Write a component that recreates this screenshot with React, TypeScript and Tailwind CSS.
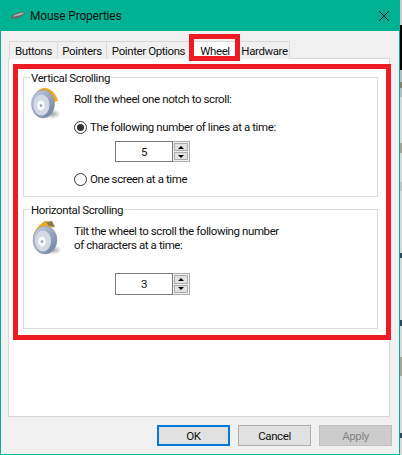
import { type FC } from 'react'

const TABS = [
  { id: 'buttons', label: 'Buttons', width: 'w-[49px]' },
  { id: 'pointers', label: 'Pointers', width: 'w-[50px]' },
  { id: 'options', label: 'Pointer Options', width: 'w-[85px]' },
  { id: 'wheel', label: 'Wheel', width: 'w-[50px]' },
  { id: 'hardware', label: 'Hardware', width: 'w-[51px]' },
]

// the sliver of the window behind this one, along the right edge
const BEHIND = [
  { id: 'a', className: 'h-[25px] bg-[#c9c9c9]' },
  { id: 'b', className: 'h-[45px] bg-black' },
  { id: 'c', className: 'h-[12px] bg-[#b8bcc0]' },
  { id: 'd', className: 'h-[6px] bg-[#8a7f6a]' },
  { id: 'e', className: 'h-[9px] bg-[#b8bcc0]' },
  { id: 'f', className: 'h-[46px] bg-[#d8d8d8]' },
  { id: 'g', className: 'h-[10px] bg-[#a89f92]' },
  { id: 'h', className: 'h-[29px] bg-[#d8d8d8]' },
  { id: 'i', className: 'h-[9px] bg-[#c4c4c4]' },
  { id: 'j', className: 'h-[62px] bg-[#d8d8d8]' },
  { id: 'k', className: 'h-[5px] bg-[#33465c]' },
  { id: 'l', className: 'h-[62px] bg-[#d8d8d8]' },
  { id: 'm', className: 'h-[6px] bg-[#33465c]' },
  { id: 'n', className: 'h-[31px] bg-[#d8d8d8]' },
  { id: 'o', className: 'h-[19px] bg-[#a9a49a]' },
  { id: 'p', className: 'h-[57px] bg-[#d8d8d8]' },
  { id: 'q', className: 'h-[5px] bg-[#33465c]' },
  { id: 'r', className: 'h-[17px] bg-[#d8d8d8]' },
]

const MouseIcon = () => (
  <svg width="16" height="9" viewBox="0 0 16 9" className="shrink-0">
    <path d="M1 6 C1 4.500 4 3 8 1.500 C11 0.500 14.500 0.500 15 2 C15.500 3.500 13 5 9 7 C5 8.500 1 8.500 1 6 Z" fill="#636e70" />
    <path d="M3 5 C5 3.500 9 2 13 1.500 C14 1.500 14 2.500 13 3 C10 4.500 6 5.500 3 5.500 Z" fill="#aab3b5" />
  </svg>
)

const VerticalWheel = () => (
  <svg width="32" height="36" viewBox="0 0 32 36" className="shrink-0">
    <defs>
      <linearGradient id="rimA" x1="0" y1="0" x2="1" y2="1">
        <stop offset="0" stopColor="#c9d3e4" />
        <stop offset="1" stopColor="#6b7b9c" />
      </linearGradient>
      <radialGradient id="shadowA">
        <stop offset="0" stopColor="#666" stopOpacity="0.6" />
        <stop offset="1" stopColor="#666" stopOpacity="0" />
      </radialGradient>
    </defs>
    <ellipse cx="21" cy="27" rx="9" ry="5" fill="url(#shadowA)" />
    <path d="M5 6 C8 1 14 0 18 2 C22 4 26 9 27 14 L23 15 C20 10 15 6 9 7 Z" fill="#eda81f" />
    <ellipse cx="12" cy="17" rx="11.500" ry="14" fill="url(#rimA)" stroke="#8492ac" strokeWidth="0.5" />
    <ellipse cx="10.500" cy="18" rx="8" ry="10.500" fill="#d3dae4" />
    <ellipse cx="10" cy="18.500" rx="3.800" ry="5" fill="#f9fafc" />
    <circle cx="10" cy="18.500" r="1.300" fill="#8d9bb0" />
  </svg>
)

const HorizontalWheel = () => (
  <svg width="32" height="36" viewBox="0 0 32 36" className="shrink-0">
    <defs>
      <linearGradient id="rimB" x1="0" y1="0" x2="1" y2="1">
        <stop offset="0" stopColor="#c9d3e4" />
        <stop offset="1" stopColor="#6b7b9c" />
      </linearGradient>
      <radialGradient id="shadowB">
        <stop offset="0" stopColor="#666" stopOpacity="0.6" />
        <stop offset="1" stopColor="#666" stopOpacity="0" />
      </radialGradient>
    </defs>
    <ellipse cx="22" cy="30" rx="9" ry="4.500" fill="url(#shadowB)" />
    <path d="M2 17 C3 10 9 4 14 1 L19 2 L24 7 L17 8 L8 13 L5 20 Z" fill="#eda81f" />
    <path d="M15 2 L21 1 L24 7 L18 6 Z" fill="#8c7a55" />
    <ellipse cx="14" cy="20" rx="12" ry="14" fill="url(#rimB)" stroke="#8492ac" strokeWidth="0.5" />
    <ellipse cx="12" cy="21" rx="8" ry="10.500" fill="#d3dae4" />
    <ellipse cx="11" cy="21.500" rx="3.800" ry="5" fill="#f9fafc" />
    <circle cx="11" cy="21.500" r="1.300" fill="#8d9bb0" />
  </svg>
)

const Radio: FC<{ checked?: boolean; label: string }> = ({ checked, label }) => (
  <div className="flex items-center gap-[3px] h-[16px]">
    <span className="w-[13px] h-[13px] rounded-full border border-[#333] bg-white flex items-center justify-center">
      {checked && <span className="w-[7px] h-[7px] rounded-full bg-[#333]" />}
    </span>
    <span>{label}</span>
  </div>
)

const Spinner: FC<{ value: number; height: string }> = ({ value, height }) => (
  <div className={`ml-[41px] w-[75px] ${height} flex`}>
    <div className="flex-1 flex items-center justify-center border border-[#7a7a7a] bg-white">{value}</div>
    <div className="w-[17px] flex flex-col border border-l-0 border-[#acacac] bg-[#f0f0f0]">
      <div className="flex-1 m-px mb-0 bg-[#e1e1e1] border border-[#acacac] flex items-center justify-center">
        <span className="w-0 h-0 border-x-[3px] border-x-transparent border-b-[3px] border-b-black" />
      </div>
      <div className="flex-1 m-px bg-[#e1e1e1] border border-[#acacac] flex items-center justify-center">
        <span className="w-0 h-0 border-x-[3px] border-x-transparent border-t-[3px] border-t-black" />
      </div>
    </div>
  </div>
)

const App = () => {
  return (
    <div className="w-[402px] h-[455px] flex bg-white text-[11.5px] tracking-[-0.4px] leading-[16px] text-[#111] font-['Roboto',sans-serif]">
      <div className="w-[400px] h-[455px] border-x border-b border-[#00b294] bg-[#f0f0f0] flex flex-col">
        <header className="h-[31px] -mx-px bg-[#00b294] flex items-center justify-between pl-[10px] pr-[10px]">
          <div className="flex items-center gap-[4px] text-[12px] tracking-[-0.2px]">
            <MouseIcon />
            <span>Mouse Properties</span>
          </div>
          <svg width="12" height="12" viewBox="0 0 12 12" className="shrink-0">
            <path d="M1 1 L11 11 M11 1 L1 11" stroke="#111" strokeWidth="1" />
          </svg>
        </header>

        <div className="relative mt-[10px] ml-[8px] h-[17px] flex">
          {TABS.map(tab => (
            <div
              key={tab.id}
              className={`${tab.width} h-[18px] flex items-center justify-center border border-b-0 border-[#d9d9d9] -mr-px ${
                tab.id === 'wheel' ? 'bg-white' : 'bg-[#f0f0f0]'
              }`}
            >
              {tab.label}
            </div>
          ))}
          <div className="absolute left-[180px] top-[-7px] w-[51px] h-[27px] border-[5px] border-[#ed1c24]" />
        </div>

        <main className="ml-[7px] w-[382px] h-[359px] border border-[#d9d9d9] bg-white pt-[5px] pl-[4px]">
          <div className="w-[378px] h-[276px] border-[5px] border-[#ed1c24] pl-[5px] pr-[8px] flex flex-col gap-[4px]">
            <fieldset className="h-[128px] border border-[#dcdcdc] pl-[6px]">
              <legend className="px-[1px] translate-y-[1px]">Vertical Scrolling</legend>
              <div className="flex pt-[2px] pl-[1px]">
                <VerticalWheel />
                <div className="ml-[11px] flex flex-col">
                  <div className="mt-[4px]">Roll the wheel one notch to scroll:</div>
                  <div className="mt-[12px]">
                    <Radio checked label="The following number of lines at a time:" />
                  </div>
                  <div className="mt-[6px]">
                    <Spinner value={5} height="h-[21px]" />
                  </div>
                  <div className="mt-[9px]">
                    <Radio label="One screen at a time" />
                  </div>
                </div>
              </div>
            </fieldset>
            <fieldset className="h-[128px] border border-[#dcdcdc] pl-[6px]">
              <legend className="px-[1px] translate-y-[1px]">Horizontal Scrolling</legend>
              <div className="flex pt-[3px] pl-[1px]">
                <HorizontalWheel />
                <div className="ml-[11px] flex flex-col">
                  <div className="mt-[4px] leading-[14px]">
                    Tilt the wheel to scroll the following number
                    <br />
                    of characters at a time:
                  </div>
                  <div className="mt-[21px]">
                    <Spinner value={3} height="h-[22px]" />
                  </div>
                </div>
              </div>
            </fieldset>
          </div>
        </main>

        <footer className="mt-[8px] pl-[156px] flex gap-[8px]">
          <button className="w-[73px] h-[21px] bg-[#e1e1e1] border-2 border-[#0078d7]">OK</button>
          <button className="w-[73px] h-[21px] bg-[#e1e1e1] border border-[#adadad]">Cancel</button>
          <button className="w-[73px] h-[21px] bg-[#cccccc] border border-[#bfbfbf] text-[#838383]">Apply</button>
        </footer>
      </div>
      <div className="w-[2px] flex flex-col">
        {BEHIND.map(part => (
          <div key={part.id} className={part.className} />
        ))}
      </div>
    </div>
  )
}

export default App
